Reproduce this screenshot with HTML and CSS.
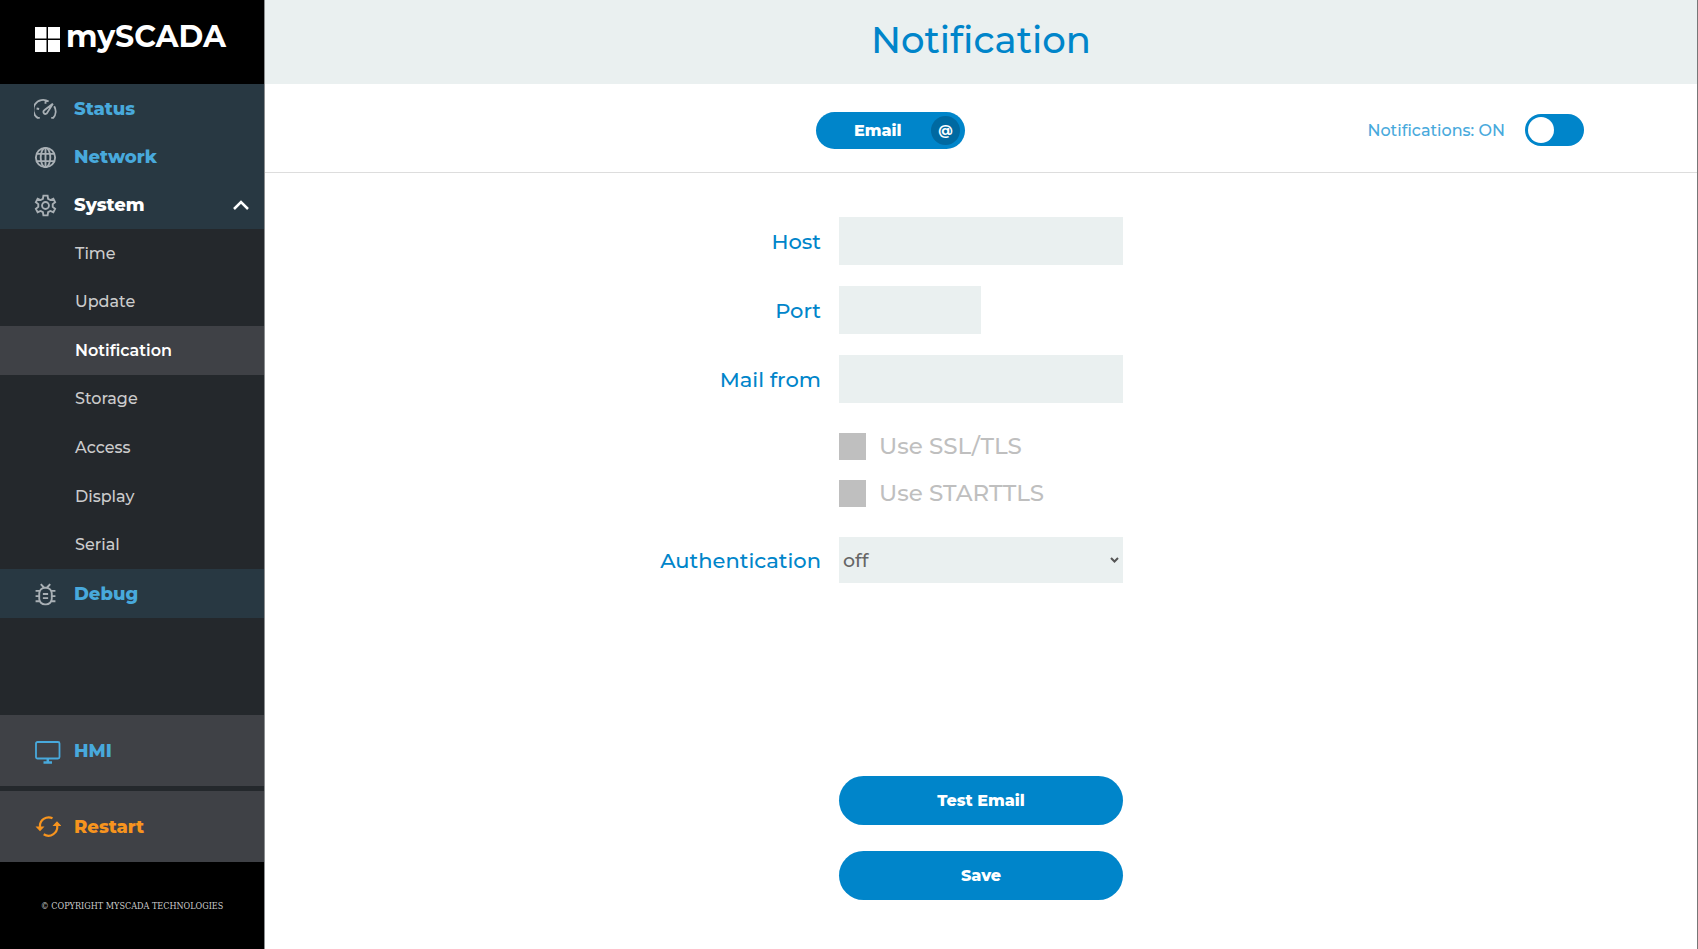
FILE: index.html
```html
<!DOCTYPE html>
<html lang="en">
    <head>
        <meta charset="UTF-8">
        <meta name="viewport" content="width=device-width, initial-scale=1">
        <title>Notification</title>
        <link rel="stylesheet" href="styles.css">
    </head>
    <body>
        <aside class="sidebar">
            <a href="#" class="logo">
                <svg width="25" height="25" viewBox="0 0 25 25" fill="#fff">
                    <path d="M0 0h11.5v11.5H0zM13 0h12v11.5H13zM0 13h11.5v12H0zM13 13h12v12H13z"/>
                </svg>
                <span>mySCADA</span>
            </a>

            <nav>
                <ul class="menu">
                    <li>
                        <a href="#">
                            <svg class="icon" viewBox="0 0 22 22">
                                <path d="M5.500 19H3.500A9.300 9.300 0 0 1 14 3.400M19.300 8a9.300 9.300 0 0 1-.9 11H16.500M11 3v2.600M2.500 10l2.400.5"/>
                                <path d="M18 5.500l-5.400 8.700a1.900 1.900 0 1 1-2.800-2.400z"/>
                            </svg>
                            Status
                        </a>
                    </li>
                    <li>
                        <a href="#">
                            <svg class="icon" viewBox="0 0 22 22">
                                <circle cx="11" cy="11" r="9.200"/>
                                <ellipse cx="11" cy="11" rx="4.600" ry="9.200"/>
                                <path d="M2.500 7.500h17M2.500 14.500h17M11 1.500v19"/>
                            </svg>
                            Network
                        </a>
                    </li>
                    <li>
                        <a href="#" class="open">
                            <svg class="icon" viewBox="0 0 22 22">
                                <path d="M9 1.500h4l.5 3.100 2.100 1.200 2.900-1.200 1.700 3.200-2.300 1.900v2.600l2.300 1.900-1.700 3.200-2.900-1.200-2.100 1.200-.5 3.100H9l-.5-3.100-2.100-1.200-2.900 1.200-1.700-3.200 2.300-1.900V9.700L1.800 7.800l1.700-3.200 2.900 1.200 2.100-1.200z"/>
                                <circle cx="11" cy="11" r="3.300"/>
                            </svg>
                            System
                            <svg class="arrow" width="16" height="10" viewBox="0 0 16 10">
                                <path d="M1 9l7-7 7 7"/>
                            </svg>
                        </a>
                    </li>
                </ul>
                <ul class="submenu">
                    <li><a href="#">Time</a></li>
                    <li><a href="#">Update</a></li>
                    <li><a href="#" class="active">Notification</a></li>
                    <li><a href="#">Storage</a></li>
                    <li><a href="#">Access</a></li>
                    <li><a href="#">Display</a></li>
                    <li><a href="#">Serial</a></li>
                </ul>
                <ul class="menu">
                    <li>
                        <a href="#">
                            <svg class="icon" viewBox="0 0 22 22">
                                <rect x="5" y="4.500" width="12" height="16" rx="5.500"/>
                                <path d="M6.500 1l3 3.300M15.500 1l-3 3.300M1.500 7.500h4.500M1.500 12.500h4M1.500 17.500h4.500M16 7.500h4.500M16.500 12.500h4M16 17.500h4.500M8.500 10.500h5M8.500 14.500h5"/>
                            </svg>
                            Debug
                        </a>
                    </li>
                </ul>
            </nav>

            <div class="actions">
                <a href="#" class="hmi">
                    <svg width="26" height="26" viewBox="0 0 26 26" fill="none" stroke="currentColor" stroke-width="1.800">
                        <rect x="1" y="4" width="23.500" height="16.500" rx="1.500"/>
                        <path d="M12.800 20.500v4M8.500 24.600h8.500" stroke-width="2.500"/>
                    </svg>
                    HMI
                </a>
                <a href="#" class="restart">
                    <svg width="26" height="24" viewBox="0 0 26 24" fill="none" stroke="currentColor" stroke-width="2.200">
                        <path d="M17.500 3.200A8.800 8.800 0 0 0 5 12M8.700 19.300A8.800 8.800 0 0 0 22 10"/>
                        <path d="M.5 11.500h9L5 16.300zM17.500 11h9L22 6.200z" fill="currentColor" stroke="none"/>
                    </svg>
                    Restart
                </a>
            </div>

            <footer class="copyright">© COPYRIGHT MYSCADA TECHNOLOGIES</footer>
        </aside>

        <main class="content">
            <h1>Notification</h1>

            <div class="toolbar">
                <button type="button" class="tab">Email <span class="at">@</span></button>
                <label class="switch">
                    Notifications: ON
                    <input type="checkbox" role="switch">
                </label>
            </div>

            <form class="settings">
                <div class="row">
                    <label for="host">Host</label>
                    <input type="text" id="host">
                </div>
                <div class="row">
                    <label for="port">Port</label>
                    <input type="text" id="port" class="short">
                </div>
                <div class="row">
                    <label for="mailFrom">Mail from</label>
                    <input type="text" id="mailFrom">
                </div>

                <div class="checks">
                    <label><input type="checkbox" name="ssl"> Use SSL/TLS</label>
                    <label><input type="checkbox" name="starttls"> Use STARTTLS</label>
                </div>

                <div class="row">
                    <label for="auth">Authentication</label>
                    <div class="select">
                        <select id="auth">
                            <option>off</option>
                            <option>on</option>
                        </select>
                        <svg width="9" height="6" viewBox="0 0 9 6">
                            <path d="M1 1l3.500 3.500L8 1"/>
                        </svg>
                    </div>
                </div>

                <div class="buttons">
                    <button type="button">Test Email</button>
                    <button type="submit">Save</button>
                </div>
            </form>
        </main>
    </body>
</html>
```
FILE: styles.css
```css
/*  Colors
Blue : #0085ca
Light blue : #48a9dc
Orange : #f7941e
Field grey : #eaf0f0
*/
* {
    box-sizing: border-box;
}

body {
    margin: 0;
    min-height: 100vh;
    display: flex;
    background-color: #fff;
    font-family: Montserrat, Inter, sans-serif;
    font-size: 16px;
    font-weight: 500;
}

a {
    color: inherit;
    text-decoration: none;
}

ul {
    list-style: none;
    margin: 0;
    padding: 0;
}

button, input, select {
    font: inherit;
    border: 0;
    margin: 0;
}

/* sidebar */
.sidebar {
    flex: 0 0 265px;
    display: flex;
    flex-direction: column;
    background-color: #24282c;
    border-right: 1px solid #8b8e90;
}

.logo {
    display: flex;
    align-items: center;
    gap: 6px;
    height: 84px;
    padding: 0 0 6px 35px;
    background-color: #000;
    color: #fff;
    font-size: 30px;
    font-weight: 700;
    line-height: 28px;
}

.logo span {
    padding-bottom: 4px;
}

.menu {
    padding-top: 1px;
    background-color: #283842;
    color: #48a9dc;
    font-size: 18px;
    font-weight: 800;
}

.menu a {
    display: flex;
    align-items: center;
    gap: 17px;
    height: 48px;
    padding: 0 15px 0 34px;
}

.menu .open {
    color: #fff;
}

.icon {
    width: 23px;
    height: 23px;
    fill: none;
    stroke: #a9b0b5;
    stroke-width: 1.8;
}

.arrow {
    margin-left: auto;
    fill: none;
    stroke: #fff;
    stroke-width: 2.5;
}

.submenu {
    display: grid;
    grid-auto-rows: 1fr;
    height: 340px;
    color: #ccc;
}

.submenu a {
    display: flex;
    align-items: center;
    height: 100%;
    padding-left: 75px;
}

.submenu .active {
    background-color: #3f4146;
    color: #fff;
    font-weight: 600;
}

.actions {
    display: flex;
    flex-direction: column;
    gap: 5px;
    margin-top: auto;
    font-size: 18px;
    font-weight: 800;
}

.actions a {
    display: flex;
    align-items: center;
    gap: 13px;
    height: 71px;
    padding-left: 35px;
    background-color: #3f4146;
}

.hmi {
    color: #48a9dc;
}

.restart {
    color: #f7941e;
}

.copyright {
    height: 87px;
    background-color: #000;
    color: #ccc;
    font-family: "DejaVu Serif Condensed", "DejaVu Serif", serif;
    font-size: 9px;
    font-weight: 400;
    line-height: 88px;
    text-align: center;
}

/* content */
.content {
    flex: 1;
    border-right: 1px solid #777;
}

h1 {
    height: 84px;
    margin: 0;
    background-color: #eaf0f0;
    color: #0085ca;
    font-size: 37px;
    font-weight: 500;
    line-height: 80px;
    text-align: center;
}

.toolbar {
    display: grid;
    grid-template-columns: 1fr 330px 1fr;
    align-items: center;
    height: 89px;
    padding-top: 4px;
    border-bottom: 1px solid #ddd;
}

.tab {
    grid-column: 2;
    display: flex;
    align-items: center;
    justify-content: space-between;
    width: 149px;
    height: 37px;
    padding: 0 5px 0 38px;
    border-radius: 19px;
    background-color: #0085ca;
    color: #fff;
    font-weight: 800;
    cursor: pointer;
}

.at {
    width: 29px;
    height: 29px;
    border-radius: 50%;
    background-color: #0069a1;
    font-size: 14px;
    font-weight: 700;
    line-height: 28px;
}

.switch {
    display: flex;
    align-items: center;
    justify-content: flex-end;
    gap: 20px;
    padding-right: 113px;
    color: #48a9dc;
}

.switch input {
    appearance: none;
    width: 59px;
    height: 32px;
    padding: 3px;
    border-radius: 16px;
    background-color: #0085ca;
    cursor: pointer;
}

.switch input::before {
    content: "";
    display: block;
    width: 26px;
    height: 26px;
    border-radius: 50%;
    background-color: #fff;
}

.switch input:checked::before {
    margin-left: auto;
}

.settings {
    display: flex;
    flex-direction: column;
    gap: 21px;
    padding: 44px 0;
}

.row {
    display: grid;
    grid-template-columns: 1fr 284px 1fr;
    align-items: center;
}

.row label {
    padding-right: 18px;
    color: #0085ca;
    font-size: 21px;
    text-align: right;
}

.row input, .row select {
    width: 100%;
    height: 48px;
    padding: 0 4px;
    border-radius: 0;
    background-color: #eaf0f0;
    color: #666;
    font-size: 19px;
}

.row .short {
    width: 50%;
}

.select {
    position: relative;
}

.row select {
    display: block;
    appearance: none;
    height: 46px;
}

.select svg {
    position: absolute;
    top: 20px;
    right: 4px;
    fill: none;
    stroke: #555;
    stroke-width: 2;
    pointer-events: none;
}

.checks, .buttons {
    display: flex;
    flex-direction: column;
    width: 284px;
    margin: 0 auto;
}

.checks {
    gap: 20px;
    padding: 9px 0;
}

.checks label {
    display: flex;
    align-items: center;
    gap: 13px;
    color: #bfbfbf;
    font-size: 23px;
    line-height: 27px;
}

.checks input {
    appearance: none;
    width: 27px;
    height: 27px;
    background-color: #bfbfbf;
}

.checks input:checked {
    background-color: #0085ca;
}

.buttons {
    gap: 26px;
    padding-top: 172px;
}

.buttons button {
    height: 49px;
    border-radius: 25px;
    background-color: #0085ca;
    color: #fff;
    font-weight: 800;
    cursor: pointer;
}
```
